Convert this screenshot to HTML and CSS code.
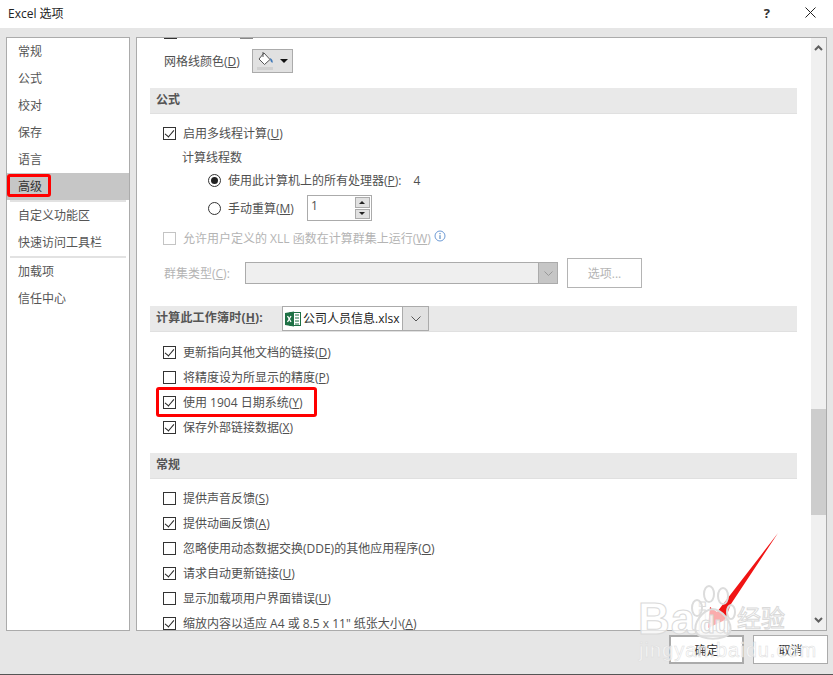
FILE: index.html
```html
<!DOCTYPE html>
<html lang="zh-CN">
<head>
  <meta charset="UTF-8" />
  <title>Excel 选项</title>
  <link rel="stylesheet" href="styles.css">
</head>
<body>
  <div class="window">
    <div class="titlebar">
      <span class="title">Excel 选项</span>
      <span class="help">?</span>
      <svg class="close" width="11" height="11" viewBox="0 0 11 11"><path d="M0.5 0.5L10.5 10.5M10.5 0.5L0.5 10.5" stroke="#222" fill="none"/></svg>
    </div>

    <div class="panes">
      <div class="sidebar">
        <div class="nav-item">常规</div>
        <div class="nav-item">公式</div>
        <div class="nav-item">校对</div>
        <div class="nav-item">保存</div>
        <div class="nav-item">语言</div>
        <div class="nav-item active">高级</div>
        <div class="nav-sep"></div>
        <div class="nav-item">自定义功能区</div>
        <div class="nav-item">快速访问工具栏</div>
        <div class="nav-sep"></div>
        <div class="nav-item">加载项</div>
        <div class="nav-item">信任中心</div>
      </div>

      <div class="main">
        <div class="content">
          <div class="clipped-row"><i></i><i class="gray"></i></div>

          <div class="color-row">
            <span>网格线颜色(<u>D</u>)</span>
            <button class="color-btn">
              <svg width="17" height="18" viewBox="0 0 17 18">
                <path d="M7 1L2 7L7.5 12.5L13 7.5Z" fill="#fff" stroke="#555"/>
                <path d="M6 0V5" stroke="#555"/>
                <path d="M13 6C15.5 7 16 9 15.5 11C14 10.5 13 8.5 13 6Z" fill="#3f78b8"/>
                <rect x="0" y="15" width="16" height="3" fill="#d0d0d0"/>
              </svg>
              <span class="caret"></span>
            </button>
          </div>

          <div class="section-head first">公式</div>
          <label class="row top-row"><span class="check on"></span><span>启用多线程计算(<u>U</u>)</span></label>
          <div class="thread-label">计算线程数</div>
          <div class="radio-row"><span class="radio on"></span><span>使用此计算机上的所有处理器(<u>P</u>):</span><span class="cpu-count">4</span></div>
          <div class="radio-row manual">
            <span class="radio"></span><span>手动重算(<u>M</u>)</span>
            <div class="spinner">
              <span class="spin-value">1</span>
              <div class="spin-btns">
                <span class="spin-btn"><i class="tri up"></i></span>
                <span class="spin-btn"><i class="tri"></i></span>
              </div>
            </div>
          </div>
          <div class="row disabled xll"><span class="check"></span><span>允许用户定义的 XLL 函数在计算群集上运行(<u>W</u>)</span>
            <svg class="info" width="12" height="12" viewBox="0 0 12 12"><circle cx="6" cy="6" r="5" fill="none" stroke="#6d9bd6"/><path d="M6 5.2V9M6 3V4.2" stroke="#3f78b8"/></svg>
          </div>
          <div class="cluster-row disabled">
            <span class="cluster-label">群集类型(<u>C</u>):</span>
            <div class="cluster-select">
              <span class="cluster-arrow"><svg width="9" height="5" viewBox="0 0 9 5"><path d="M0.5 0.5L4.5 4.5L8.5 0.5" stroke="#999" fill="none"/></svg></span>
            </div>
            <button class="options-btn">选项...</button>
          </div>

          <div class="section-head workbook">
            <span class="wb-label">计算此工作簿时(<u>H</u>):</span>
            <div class="wb-combo">
              <span class="wb-file">
                <svg width="16" height="16" viewBox="0 0 16 16">
                  <rect x="5" y="1.5" width="10.5" height="13" fill="#fff" stroke="#1e7145"/>
                  <path d="M10 4H14M10 7H14M10 10H14M10 13H14" stroke="#1e7145"/>
                  <path d="M0 2L9 0.5V15.5L0 14Z" fill="#1e7145"/>
                  <path d="M2.5 5L6 11M6 5L2.5 11" stroke="#fff" stroke-width="1.3"/>
                </svg>
                <span>公司人员信息.xlsx</span>
              </span>
              <span class="wb-arrow"><svg width="10" height="6" viewBox="0 0 10 6"><path d="M0.5 0.5L5 5L9.5 0.5" stroke="#555" fill="none"/></svg></span>
            </div>
          </div>
          <div class="row-group">
            <label class="row"><span class="check on"></span><span>更新指向其他文档的链接(<u>D</u>)</span></label>
            <label class="row"><span class="check"></span><span>将精度设为所显示的精度(<u>P</u>)</span></label>
            <label class="row"><span class="check on"></span><span>使用 1904 日期系统(<u>Y</u>)</span></label>
            <label class="row"><span class="check on"></span><span>保存外部链接数据(<u>X</u>)</span></label>
          </div>

          <div class="section-head general">常规</div>
          <div class="row-group tight">
            <label class="row"><span class="check"></span><span>提供声音反馈(<u>S</u>)</span></label>
            <label class="row"><span class="check on"></span><span>提供动画反馈(<u>A</u>)</span></label>
            <label class="row"><span class="check"></span><span>忽略使用动态数据交换(DDE)的其他应用程序(<u>O</u>)</span></label>
            <label class="row"><span class="check on"></span><span>请求自动更新链接(<u>U</u>)</span></label>
            <label class="row"><span class="check"></span><span>显示加载项用户界面错误(<u>U</u>)</span></label>
            <label class="row"><span class="check on"></span><span>缩放内容以适应 A4 或 8.5 x 11" 纸张大小(<u>A</u>)</span></label>
          </div>
        </div>

        <div class="scrollbar">
          <svg class="scroll-arrow" width="9" height="6" viewBox="0 0 9 6"><path d="M1 5L4.5 1.5L8 5" stroke="#606060" stroke-width="2" fill="none"/></svg>
          <div class="thumb"></div>
          <svg class="scroll-arrow" width="9" height="6" viewBox="0 0 9 6"><path d="M1 1L4.5 4.5L8 1" stroke="#606060" stroke-width="2" fill="none"/></svg>
        </div>
      </div>
    </div>

    <div class="footer">
      <button class="dlg-btn default">确定</button>
      <button class="dlg-btn">取消</button>
    </div>
  </div>

  <!-- annotations drawn over the dialog -->
  <div class="mark mark-nav"></div>
  <div class="mark mark-row"></div>
  <svg class="arrow" width="833" height="675" viewBox="0 0 833 675">
    <path d="M778 533L731 604L725 620L708 628L710 607L717 612Z" fill="#f01414"/>
  </svg>

  <div class="watermark">
    <span class="wm-big">Bai</span>
    <svg class="wm-paw" width="46" height="58" viewBox="0 0 46 58">
      <g fill="rgba(255,255,255,0.35)" stroke="#dcdcdc" stroke-width="2">
        <ellipse cx="7" cy="23" rx="5" ry="8"/>
        <ellipse cx="19" cy="9" rx="5" ry="8"/>
        <ellipse cx="33" cy="11" rx="5" ry="8"/>
        <ellipse cx="41" cy="27" rx="4" ry="7"/>
      </g>
      <path d="M22 24C12 26 3 38 6 47C10 56 36 56 40 47C43 38 32 24 22 24Z" fill="rgba(255,255,255,0.65)" stroke="#dcdcdc" stroke-width="2"/>
    </svg>
    <span class="wm-du">du</span>
    <span class="wm-cn">经验</span>
    <div class="wm-url">jingyan.baidu.com</div>
  </div>
</body>
</html>
```

FILE: styles.css
```css
* {
  box-sizing: border-box;
}

body {
  margin: 0;
  background: #e6e6e6;
  font-family: "Open Sans", "Noto Sans CJK SC", sans-serif;
  font-size: 12px;
  color: #505050;
  overflow: hidden;
}

u {
  text-underline-offset: 1px;
}

.window {
  height: 675px;
  display: flex;
  flex-direction: column;
  border-bottom: 1px solid #555;
}

.titlebar {
  height: 28px;
  flex: none;
  background: #fff;
  display: flex;
  align-items: center;
  padding: 0 17px 3px 8px;
  color: #222;
}

.title {
  flex: 1;
  font-size: 12px;
}

.help {
  font-size: 13px;
  font-weight: bold;
  color: #333;
  margin-right: 35px;
}

.panes {
  display: flex;
  gap: 6px;
  height: 594px;
  flex: none;
  margin: 9px 6px 0;
}

.sidebar {
  width: 124px;
  flex: none;
  background: #fff;
  border: 1px solid #ababab;
}

.nav-item {
  height: 27px;
  line-height: 27px;
  padding-left: 11px;
  color: #555;
}

.nav-item.active {
  background: #c6c6c6;
  color: #333;
}

.nav-sep {
  height: 2px;
  margin: 0 3px;
  background: #e2e2e2;
}

.main {
  flex: 1;
  display: flex;
  background: #fff;
  border: 1px solid #ababab;
  overflow: hidden;
}

.content {
  flex: 1;
  min-width: 0;
  padding: 0 14px 0 13px;
}

.clipped-row {
  height: 2px;
  display: flex;
  gap: 63px;
  padding-left: 14px;
}

.clipped-row i {
  width: 13px;
  height: 1px;
  background: #333;
}

.clipped-row i.gray {
  background: #888;
}

.color-row {
  display: flex;
  align-items: center;
  gap: 12px;
  height: 23px;
  margin-top: 9px;
  padding-left: 14px;
}

.color-btn {
  width: 41px;
  height: 24px;
  padding: 1px 0 0 4px;
  display: flex;
  align-items: center;
  gap: 6px;
  background: #e1e1e1;
  border: 1px solid #ababab;
}

.caret {
  width: 0;
  height: 0;
  border-left: 4px solid transparent;
  border-right: 4px solid transparent;
  border-top: 4px solid #111;
}

.section-head {
  background: #e9e9e9;
  border-bottom: 1px solid #e0e0e0;
  height: 26px;
  line-height: 24px;
  padding-left: 6px;
  font-weight: bold;
  color: #555;
}

.section-head.first {
  margin-top: 16px;
}

.section-head.general {
  margin-top: 13px;
}

.section-head.workbook {
  margin-top: 18px;
  display: flex;
  align-items: stretch;
  gap: 7px;
}

.wb-label {
  width: 119px;
  white-space: nowrap;
  letter-spacing: 0.2px;
}

.wb-combo {
  width: 147px;
  display: flex;
  border: 1px solid #ababab;
  font-weight: normal;
}

.wb-file {
  width: 119px;
  flex: none;
  background: #fff;
  color: #222;
  display: flex;
  align-items: center;
  gap: 2px;
  padding-left: 2px;
  white-space: nowrap;
}

.wb-arrow {
  flex: 1;
  background: #e1e1e1;
  border-left: 1px solid #ababab;
  display: flex;
  align-items: center;
  justify-content: center;
}

.row {
  display: flex;
  align-items: center;
  height: 25px;
  padding-left: 13px;
  white-space: pre;
}

.top-row {
  margin-top: 7px;
  height: 24px;
}

.row-group {
  margin-top: 8px;
}

.row-group.tight {
  margin-top: 7px;
}

.row-group .row > span:last-child {
  margin-bottom: 2px;
}

.check {
  position: relative;
  width: 13px;
  height: 13px;
  flex: none;
  margin-right: 7px;
  background: #fff;
  border: 1px solid #333;
}

.check.on::after {
  content: "";
  position: absolute;
  left: 3px;
  top: 0;
  width: 4px;
  height: 8px;
  border-right: 1px solid #222;
  border-bottom: 1px solid #222;
  transform: rotate(40deg);
}

.thread-label {
  height: 26px;
  line-height: 26px;
  padding-left: 32px;
}

.radio-row {
  display: flex;
  align-items: center;
  height: 18px;
  padding-left: 58px;
  white-space: pre;
}

.radio-row.manual {
  height: 26px;
  margin-top: 6px;
}

.radio {
  position: relative;
  width: 13px;
  height: 13px;
  flex: none;
  margin-right: 7px;
  border: 1px solid #333;
  border-radius: 50%;
}

.radio.on::after {
  content: "";
  position: absolute;
  left: 2px;
  top: 2px;
  width: 7px;
  height: 7px;
  border-radius: 50%;
  background: #222;
}

.cpu-count {
  margin-left: 12px;
}

.spinner {
  width: 65px;
  height: 26px;
  margin-left: 13px;
  display: flex;
  border: 1px solid #ababab;
}

.spin-value {
  flex: 1;
  padding-left: 3px;
  line-height: 20px;
}

.spin-btns {
  width: 17px;
  display: flex;
  flex-direction: column;
  gap: 1px;
  padding: 1px;
}

.spin-btn {
  flex: 1;
  background: #e1e1e1;
  border: 1px solid #ababab;
  display: flex;
  align-items: center;
  justify-content: center;
}

.tri {
  width: 0;
  height: 0;
  border-left: 3px solid transparent;
  border-right: 3px solid transparent;
  border-top: 3px solid #222;
}

.tri.up {
  border-top: 0;
  border-bottom: 3px solid #222;
}

.disabled {
  color: #b4b4b4;
}

.disabled .check {
  border-color: #c4c4c4;
}

.xll {
  margin-top: 5px;
  height: 24px;
}

.info {
  margin: -5px 0 0 3px;
}

.cluster-row {
  display: flex;
  align-items: center;
  height: 30px;
  margin-top: 8px;
  padding-left: 14px;
}

.cluster-label {
  width: 81px;
}

.cluster-select {
  width: 313px;
  height: 22px;
  display: flex;
  justify-content: flex-end;
  background: #efefef;
  border: 1px solid #ababab;
}

.cluster-arrow {
  width: 19px;
  background: #c6c6c6;
  border-left: 1px solid #ababab;
  display: flex;
  align-items: center;
  justify-content: center;
}

.options-btn {
  width: 75px;
  height: 30px;
  margin-left: 9px;
  padding: 0;
  background: #fff;
  border: 1px solid #b4b4b4;
  color: #b4b4b4;
  font: inherit;
}

.scrollbar {
  width: 15px;
  flex: none;
  background: #f0f0f0;
  display: flex;
  flex-direction: column;
  align-items: center;
  padding: 7px 0;
}

.scroll-arrow {
  flex: none;
}

.thumb {
  align-self: stretch;
  height: 106px;
  margin: 358px 0 auto;
  background: #cdcdcd;
}

.footer {
  display: flex;
  justify-content: flex-end;
  gap: 9px;
  padding: 4px 5px 0 0;
}

.dlg-btn {
  width: 75px;
  height: 29px;
  padding: 0;
  background: #fff;
  border: 1px solid #ababab;
  color: #333;
  font: inherit;
}

.dlg-btn.default {
  border: 2px solid #ababab;
}

.mark {
  position: absolute;
  border: 3px solid #f00;
  border-radius: 3px;
}

.mark-nav {
  left: 7px;
  top: 174px;
  width: 44px;
  height: 23px;
}

.mark-row {
  left: 156px;
  top: 387px;
  width: 161px;
  height: 30px;
}

.arrow {
  position: absolute;
  left: 0;
  top: 0;
}

.watermark {
  position: absolute;
  left: 638px;
  top: 585px;
  width: 195px;
  height: 85px;
}

.wm-big {
  position: absolute;
  left: 0;
  top: 9px;
  font-family: "Liberation Sans", sans-serif;
  font-size: 44px;
  line-height: 50px;
  font-weight: bold;
  letter-spacing: 1px;
  -webkit-text-stroke: 1px #dadada;
  color: rgba(255, 255, 255, 0.7);
}

.wm-paw {
  position: absolute;
  left: 52px;
  top: 0;
}

.wm-du {
  position: absolute;
  left: 62px;
  top: 26px;
  font-family: "Liberation Sans", sans-serif;
  font-size: 24px;
  line-height: 28px;
  font-weight: bold;
  color: rgba(255, 255, 255, 0.8);
  -webkit-text-stroke: 1px #dadada;
}

.wm-cn {
  position: absolute;
  left: 99px;
  top: 17px;
  font-size: 24px;
  line-height: 32px;
  color: rgba(255, 255, 255, 0.7);
  -webkit-text-stroke: 1px #dadada;
}

.wm-url {
  position: absolute;
  left: 1px;
  top: 53px;
  font-family: "Liberation Sans", sans-serif;
  font-size: 20px;
  line-height: 24px;
  letter-spacing: 1px;
  color: rgba(255, 255, 255, 0.7);
  -webkit-text-stroke: 0.5px #dcdcdc;
}
```
